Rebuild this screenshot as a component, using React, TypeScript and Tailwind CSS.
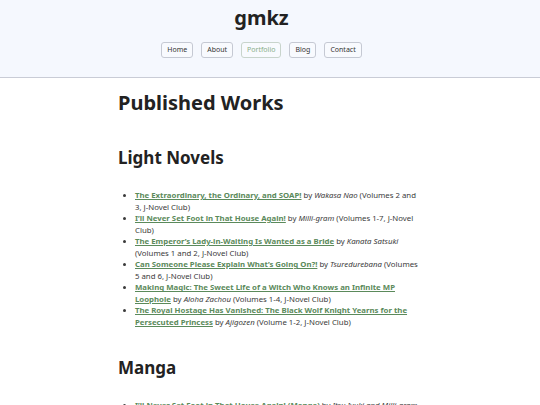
const font = { fontFamily: '"Noto Sans", "DejaVu Sans", sans-serif' }

const navItems = ['Home', 'About', 'Portfolio', 'Blog', 'Contact']

type Work = { title: string; author: string; note: string }

const lightNovels: Work[] = [
  { title: 'The Extraordinary, the Ordinary, and SOAP!', author: 'Wakasa Nao', note: '(Volumes 2 and 3, J-Novel Club)' },
  { title: 'I\u2019ll Never Set Foot in That House Again!', author: 'Milli-gram', note: '(Volumes 1-7, J-Novel Club)' },
  { title: 'The Emperor\u2019s Lady-in-Waiting Is Wanted as a Bride', author: 'Kanata Satsuki', note: '(Volumes 1 and 2, J-Novel Club)' },
  { title: 'Can Someone Please Explain What\u2019s Going On?!', author: 'Tsuredurebana', note: '(Volumes 5 and 6, J-Novel Club)' },
  { title: 'Making Magic: The Sweet Life of a Witch Who Knows an Infinite MP Loophole', author: 'Aloha Zachou', note: '(Volumes 1-4, J-Novel Club)' },
  { title: 'The Royal Hostage Has Vanished: The Black Wolf Knight Yearns for the Persecuted Princess', author: 'Ajigozen', note: '(Volume 1-2, J-Novel Club)' },
]

const manga: Work[] = [
  { title: 'I\u2019ll Never Set Foot in That House Again! (Manga)', author: 'Itsu Iyuki and Milli-gram', note: '(Volumes 1-3, J-Novel Club)' },
]

function WorkList({ items }: { items: Work[] }) {
  return (
    <ul className="list-disc pl-[17px] text-[7.8px] leading-[11.55px] text-[#3a3a3a]">
      {items.map((w) => (
        <li key={w.title}>
          <a href="#" className="font-bold text-[#5b8a5b] underline underline-offset-[1px]">{w.title}</a>
          {' by '}<em>{w.author}</em>{' '}{w.note}
        </li>
      ))}
    </ul>
  )
}

export default function App() {
  return (
    <div className="min-h-screen bg-white text-[#222]" style={font}>
      {/* page was shot with room for a scrollbar, so the header centres on 523px */}
      <header className="bg-[#f5f8fe] border-b border-[#c9ccd6] pt-[6px] pb-[19px] pr-[17px] flex flex-col items-center">
        <h1 className="text-[20px] leading-[24px] font-bold text-[#222]">gmkz</h1>
        <nav className="flex gap-[8px] mt-[12px]">
          {navItems.map((n) => (
            <a key={n} href="#"
              className={`h-[16px] px-[5px] flex items-center text-[7px] rounded-[3px] border bg-[#f8fafe] ${n === 'Portfolio' ? 'border-[#c8d4cc] text-[#8aae8a]' : 'border-[#c5c9d3] text-[#333]'}`}>
              {n}
            </a>
          ))}
        </nav>
      </header>
      <main className="w-[304px] mx-auto">
        <h1 className="text-[20px] leading-[24px] font-bold mt-[13px]">Published Works</h1>
        <h2 className="text-[17px] leading-[22px] font-bold mt-[32px]">Light Novels</h2>
        <div className="mt-[21px]"><WorkList items={lightNovels} /></div>
        <h2 className="text-[17px] leading-[22px] font-bold mt-[28px]">Manga</h2>
        <div className="mt-[21px]"><WorkList items={manga} /></div>
      </main>
    </div>
  )
}
